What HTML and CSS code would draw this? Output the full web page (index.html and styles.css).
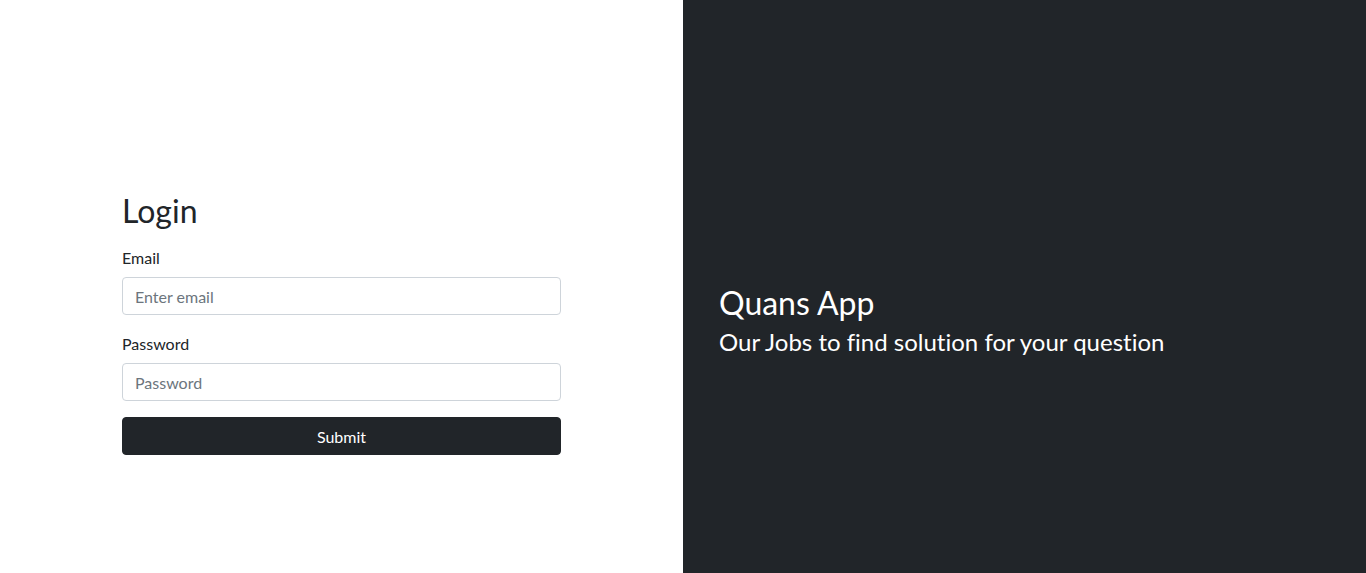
FILE: index.html
```html
<!DOCTYPE html>
<html lang="en">
<head>
<meta charset="utf-8">
<title>Login - Quans App</title>
<link rel="stylesheet" href="styles.css">
</head>
<body>
<div class="split">
  <div class="pane pane-left">
    <form class="login-form">
      <h2 class="login-title">Login</h2>
      <div class="form-group">
        <label class="form-label" for="email">Email</label>
        <input class="form-control" id="email" type="email" placeholder="Enter email">
      </div>
      <div class="form-group">
        <label class="form-label" for="password">Password</label>
        <input class="form-control" id="password" type="password" placeholder="Password">
      </div>
      <button class="btn-submit" type="submit">Submit</button>
    </form>
  </div>
  <div class="pane pane-right">
    <div class="brand">
      <h2 class="brand-title">Quans App</h2>
      <h4 class="brand-sub">Our Jobs to find solution for your question</h4>
    </div>
  </div>
</div>
</body>
</html>
```
FILE: styles.css
```css
* { box-sizing: border-box; }
html, body { margin: 0; padding: 0; }
body {
  font-family: "Lato", "Open Sans", sans-serif;
  font-size: 16px;
  line-height: 1.5;
  color: #212529;
  background: #fff;
  font-variant-ligatures: none;
}
.split {
  display: flex;
  height: 100vh;
}
.pane {
  flex: 1 1 50%;
  display: flex;
  flex-direction: column;
  justify-content: center;
}
.pane-left {
  padding: 72px 122px 0;
}
.pane-right {
  background: #212529;
  color: #fff;
  padding: 76px 0 0 36px;
}
.login-title {
  font-size: 32px;
  font-weight: 400;
  line-height: 1.2;
  margin: 0 0 14px;
  padding-top: 2px;
}
.form-group { margin-bottom: 16px; }
.form-label {
  display: inline-block;
  margin-bottom: 8px;
  padding-top: 1px;
  line-height: 23px;
}
.form-control {
  display: block;
  width: 100%;
  height: 38px;
  padding: 7px 12px 5px;
  font: inherit;
  color: #495057;
  border: 1px solid #ced4da;
  border-radius: 4px;
  background: #fff;
}
.form-control::placeholder { color: #6c757d; opacity: 1; }
.btn-submit {
  display: block;
  width: 100%;
  height: 38px;
  font: inherit;
  color: #fff;
  background: #212529;
  border: 1px solid #212529;
  border-radius: 4px;
  padding: 7px 12px 5px;
}
.brand-title {
  font-size: 32px;
  font-weight: 400;
  line-height: 1.2;
  margin: 0 0 6px;
}
.brand-sub {
  font-size: 24px;
  font-weight: 400;
  line-height: 1.2;
  margin: 0 0 8px;
}
```
